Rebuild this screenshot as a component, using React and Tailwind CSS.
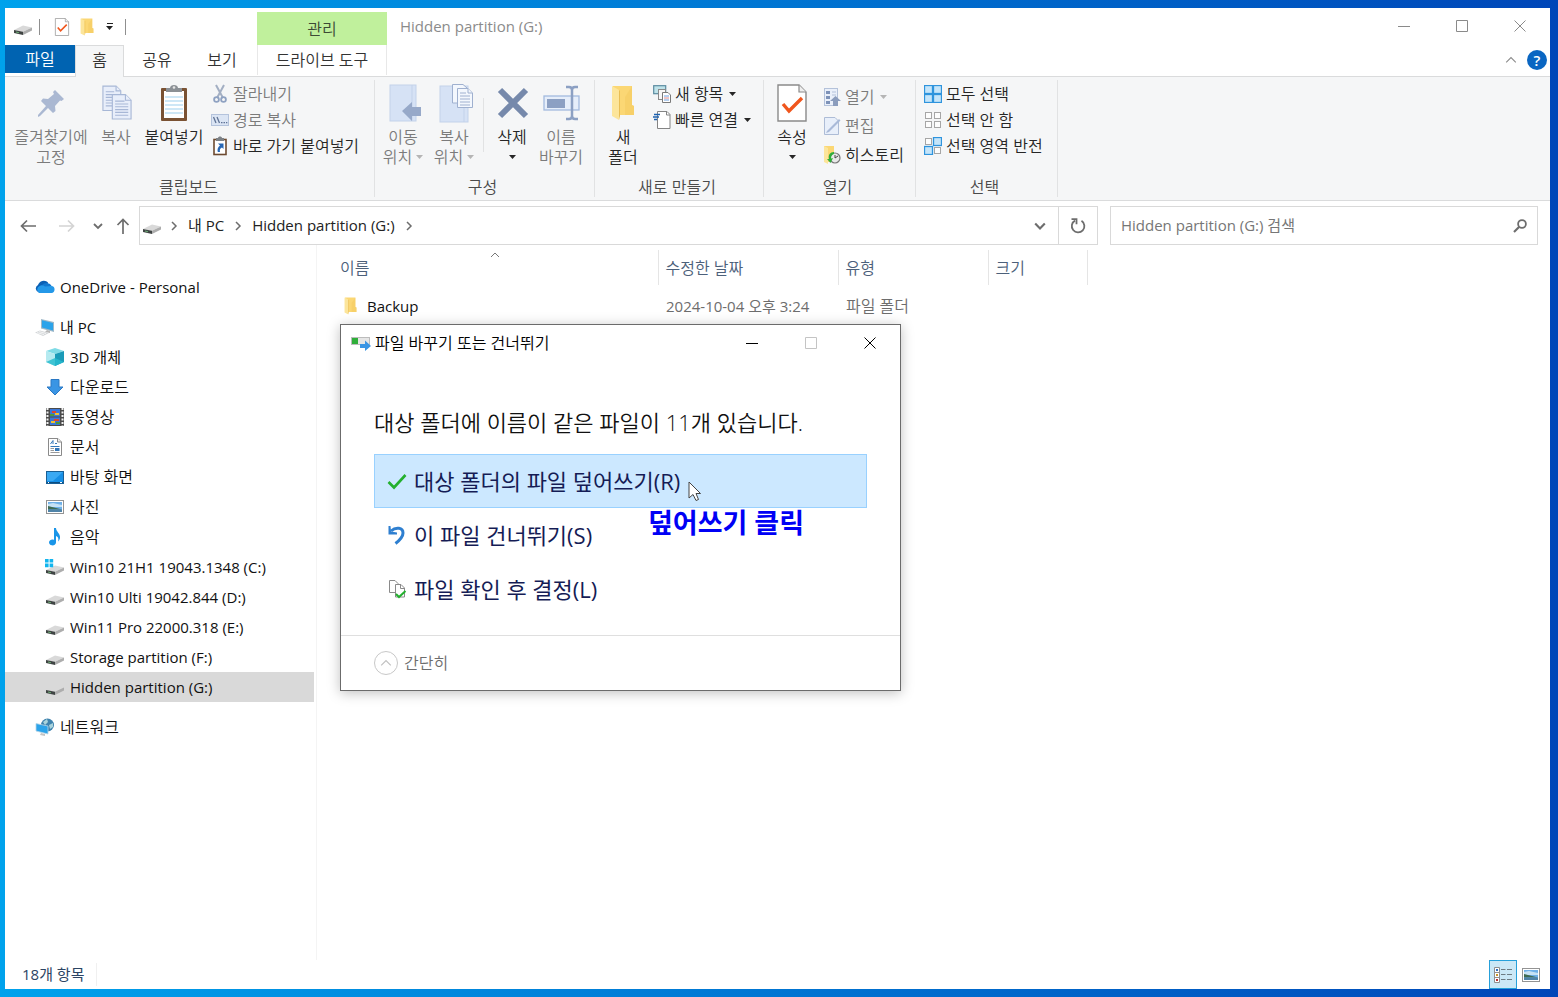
const DIM = "text-[#7b7b7b]";
const INK = "text-[#262626]";

/* ---------- icons ---------- */

function DriveIcon({ windows = false, className = "h-5 w-5" }) {
  return (
    <svg viewBox="0 0 20 20" className={`shrink-0 ${className}`} aria-hidden="true">
      <path d="M1 13 10 8.500 19 10.500 10 14.800Z" fill="#d9d9d9" />
      <path d="M10 14.800 19 10.500V13.500L10 18Z" fill="#adadad" />
      <path d="M1 13 10 14.800V18L1 16Z" fill="#3f4443" />
      <path d="M3 14.600 6 15.200v1l-3-.6Z" fill="#6fae77" />
      {windows && (
        <path d="M0 2h3.6v3.6H0zM4.6 2h3.6v3.6H4.6zM0 6.6h3.6v3.6H0zM4.6 6.6h3.6v3.6H4.6z" fill="#12b5ee" />
      )}
    </svg>
  );
}

function FolderIcon({ className }) {
  return (
    <svg viewBox="0 0 24 36" preserveAspectRatio="none" className={`shrink-0 ${className}`} aria-hidden="true">
      <path d="M2 1H21V20L23 21V30H2Z" fill="#fbd774" />
      <path d="M14 20V12L21 1V20L23 21V30H14Z" fill="#f5cc62" opacity=".6" />
      <path d="M1 1 8 5V35L1 31Z" fill="#fce59b" />
      <path d="M8 5V35L9 31V6Z" fill="#e9be55" />
    </svg>
  );
}

function CheckPage({ className }) {
  return (
    <svg viewBox="0 0 30 38" className={`shrink-0 ${className}`} aria-hidden="true">
      <path d="M1 1H22L29 8V37H1Z" fill="#fff" stroke="#8a8a8a" strokeWidth="1.4" />
      <path d="M22 1V8H29" fill="#eee" stroke="#8a8a8a" strokeWidth="1.2" />
      <path d="M6 20 12 27 25 14" fill="none" stroke="#f0561d" strokeWidth="3.4" />
    </svg>
  );
}

function PinIcon() {
  return (
    <svg viewBox="0 0 28 28" className="h-7 w-7" aria-hidden="true">
      <path d="M18 1 27 10 24.500 12 23 11.500 18 17 18.500 22 16 24 11 19 3 27 1 28 1 26 9 17 4 12 6 9.500 11 10 17 5 16 3Z" fill="#aab8d2" />
    </svg>
  );
}

function CopyIcon() {
  return (
    <svg viewBox="0 0 32 38" className="ml-0.5 h-9 w-[30px]" aria-hidden="true">
      <g fill="#e8eefa" stroke="#a7b7d6" strokeWidth="1.200">
        <path d="M1 1H15L20 6V27H1Z" />
        <path d="M15 1V6H20M4 7H13M4 10H17M4 13H17M4 16H17M4 19H17M4 22H17" />
        <path d="M11 10H25L31 16V36H11Z" />
        <path d="M25 10V16H31M14 17H24M14 20H28M14 23H28M14 26H28M14 29H28M14 32H28" />
      </g>
    </svg>
  );
}

function PasteIcon() {
  return (
    <svg viewBox="0 0 28 38" className="h-[38px] w-7" aria-hidden="true">
      <rect x="1" y="4" width="26" height="33" rx="1" fill="#7a5233" />
      <rect x="4" y="7" width="20" height="27" fill="#fff" />
      <path d="M5 13H23M5 17H23M5 21H23M5 25H23M5 29H23" stroke="#bfe0f4" strokeWidth="1.500" />
      <path d="M6 4H10C10 0 18 0 18 4H22V8H6Z" fill="#8b9095" />
      <circle cx="14" cy="3.500" r="1.300" fill="#e5e5e5" />
    </svg>
  );
}

function ScissorsIcon() {
  return (
    <svg viewBox="0 0 18 20" className="h-5 w-[18px] shrink-0" aria-hidden="true">
      <path d="M5 1 12 14M13 1 6 14" stroke="#a3afc3" strokeWidth="2" />
      <circle cx="5.500" cy="15.500" r="2.400" fill="none" stroke="#8fa2c2" strokeWidth="1.800" />
      <circle cx="12.500" cy="15.500" r="2.400" fill="none" stroke="#8fa2c2" strokeWidth="1.800" />
    </svg>
  );
}

function PathIcon() {
  return (
    <svg viewBox="0 0 18 12" className="h-3 w-[18px] shrink-0" aria-hidden="true">
      <rect x=".5" y=".5" width="17" height="11" fill="#dbe5f4" stroke="#b4c3dc" />
      <path d="M2.500 3 5 9M6 3 8.500 9" stroke="#5f7396" strokeWidth="1.300" />
      <path d="M10 8h1.500v1.300H10zM12.500 8H14v1.300h-1.500zM15 8h1.300v1.300H15z" fill="#5f7396" />
    </svg>
  );
}

function PasteShortcutIcon() {
  return (
    <svg viewBox="0 0 18 20" className="h-5 w-[18px] shrink-0" aria-hidden="true">
      <rect x="3" y="3.500" width="12" height="15" fill="#fff" stroke="#6d4a30" strokeWidth="1.600" />
      <path d="M5 2H7C7 0 11 0 11 2H13V5H5Z" fill="#7d8287" />
      <path d="M7 7.500H12.500V13L11 11.500C9 12 8.500 14 9 16H6.800C6 13 7 11 9 9.500Z" fill="#2767b5" />
    </svg>
  );
}

function MoveToIcon() {
  return (
    <svg viewBox="0 0 34 38" className="ml-1 h-[38px] w-[34px]" aria-hidden="true">
      <rect x="2" y="1" width="26" height="36" fill="#d6e2f5" stroke="#c3d2ea" />
      <path d="M24 1V37" stroke="#c3d2ea" />
      <path d="M14 27 24 18V23H33V32H24V37Z" fill="#97a9c9" />
    </svg>
  );
}

function CopyToIcon() {
  return (
    <svg viewBox="0 0 34 40" className="ml-1 h-10 w-[34px]" aria-hidden="true">
      <rect x="1" y="3" width="28" height="36" fill="#d6e2f5" stroke="#c3d2ea" />
      <path d="M25 3V39" stroke="#c3d2ea" />
      <g fill="#f3f7fd" stroke="#9fb0cf">
        <path d="M13.500 1.500H24L28 5V20H13.500Z" />
        <path d="M18.500 5.500H29L33.500 10V24.500H18.500Z" />
        <path d="M29 5.500V10H33M21 10H27M21 13H31M21 16H31M21 19H31M21 22H31" />
      </g>
    </svg>
  );
}

function DeleteIcon() {
  return (
    <svg viewBox="0 0 32 32" className="ml-0.5 h-8 w-8" aria-hidden="true">
      <path d="M3 3 29 29M29 3 3 29" stroke="#7689ab" strokeWidth="6" />
    </svg>
  );
}

function RenameIcon() {
  return (
    <svg viewBox="0 0 38 36" className="ml-0.5 h-9 w-[38px]" aria-hidden="true">
      <rect x="1" y="11" width="35" height="14" fill="#e6eefa" stroke="#a3bbdf" strokeWidth="1.300" />
      <rect x="4" y="14" width="18" height="9" fill="#8ca0c3" />
      <path d="M23 2H26C28 2 29 3 29 5V31C29 33 28 34 26 34H23M35 2H32C30 2 29 3 29 5M29 31C29 33 30 34 32 34H35" fill="none" stroke="#8ca0c3" strokeWidth="2.500" />
    </svg>
  );
}

function NewItemIcon() {
  return (
    <svg viewBox="0 0 18 20" className="h-5 w-[18px] shrink-0" aria-hidden="true">
      <rect x=".7" y="1.700" width="12" height="8" fill="#bfe3ea" stroke="#5b8ca0" strokeWidth="1.200" />
      <rect x="5.500" y="5.500" width="7" height="10" fill="#f7f7f7" stroke="#8a8a8a" />
      <path d="M9.500 8.500H15L17.500 11V18.500H9.500Z" fill="#fff" stroke="#7a7a7a" />
      <path d="M11 12H16M11 16H16" stroke="#6aa0e0" />
      <path d="M11 14H16" stroke="#e08a8a" />
    </svg>
  );
}

function EasyAccessIcon() {
  return (
    <svg viewBox="0 0 18 20" className="h-5 w-[18px] shrink-0" aria-hidden="true">
      <path d="M4.500 1.500H14L17 4.500V18.500H4.500Z" fill="#fff" stroke="#848484" />
      <path d="M13.500 1.500V5H17" fill="none" stroke="#848484" />
      <path d="M1 4.500H7M0 7H6M1 9.500H4" stroke="#1d62b0" strokeWidth="1.500" />
    </svg>
  );
}

function OpenIcon() {
  return (
    <svg viewBox="0 0 18 20" className="h-5 w-[18px] shrink-0" aria-hidden="true">
      <rect x="1.500" y="1.500" width="13" height="17" fill="#eaf0fa" stroke="#b4c2da" />
      <path d="M3 4h4v3H3zM3 9h4v3H3zM3 14h4v3H3z" fill="#7d92b8" />
      <path d="M9 5H13M9 8H13" stroke="#b4c2da" />
      <path d="M12.500 9 18 14H15V19H10V14H7Z" fill="#8b9dbd" />
    </svg>
  );
}

function EditIcon() {
  return (
    <svg viewBox="0 0 18 20" className="h-5 w-[18px] shrink-0" aria-hidden="true">
      <path d="M1.500 1.500H12L15.500 5V18.500H1.500Z" fill="#e8effa" stroke="#adbcd6" />
      <path d="M4 15 16 3 17.500 4.500 6 16 3 17Z" fill="#a9bad8" />
    </svg>
  );
}

function HistoryIcon() {
  return (
    <svg viewBox="0 0 18 20" className="h-5 w-[18px] shrink-0" aria-hidden="true">
      <path d="M1 1H11V17H1Z" fill="#fbd774" />
      <path d="M1 1 5 3V19L1 17Z" fill="#fce59b" />
      <circle cx="12" cy="13" r="5" fill="#e8e8e8" stroke="#777" strokeWidth="1.200" />
      <path d="M12 10V13L15 11" fill="none" stroke="#444" />
      <path d="M11 7C7 7 5 10 6 14L4 14 7.500 18 10 13 8 13.500C8 11 9 9.500 11 9Z" fill="#2fae3a" />
    </svg>
  );
}

// Four cells; the ones listed in `on` are drawn selected.
function CellsIcon({ on }) {
  const cells = [[1, 1], [10, 1], [1, 10], [10, 10]];
  return (
    <svg viewBox="0 0 18 18" className="h-[18px] w-[18px] shrink-0" aria-hidden="true">
      {cells.map(([x, y], i) =>
        on.includes(i) ? (
          <rect key={i} x={x - 0.5} y={y - 0.5} width="8" height="8" fill="#c5e5fa" stroke="#2f94dd" strokeWidth="1.300" />
        ) : (
          <rect key={i} x={x + 0.5} y={y + 0.5} width="6" height="6" fill="#fdfdfd" stroke="#a6a6a6" />
        )
      )}
    </svg>
  );
}

function OneDriveIcon() {
  return (
    <svg viewBox="0 0 20 20" className="h-5 w-5 shrink-0" aria-hidden="true">
      <path d="M4 15.500A4 4 0 0 1 3 8 6 6 0 0 1 13 5.500L12 12Z" fill="#0a5fb4" />
      <path d="M7 8A6 6 0 0 1 16.500 8.500L12 13Z" fill="#1177cf" />
      <path d="M4 16A4 4 0 0 1 4.500 9C6 8 8 8 10 9.500L17 9A3.600 3.600 0 0 1 16.500 16Z" fill="#2498e8" />
    </svg>
  );
}

function PcIcon() {
  return (
    <svg viewBox="0 0 20 20" className="h-5 w-5 shrink-0" aria-hidden="true">
      <path d="M6 2 19 5V15L6 11.500Z" fill="#9fb8c8" />
      <path d="M7 3.300 18 6V13.500L7 10.500Z" fill="#2ba3ea" />
      <path d="M12 13 15 14V16L10 15Z" fill="#b5b5b5" />
      <path d="M0 15.500 5 13.500 14 16 8 19Z" fill="#d3d6d8" />
      <path d="M2 15.600 9 17.600M4 14.600 11 16.500" stroke="#fff" strokeWidth=".7" />
    </svg>
  );
}

function CubeIcon() {
  return (
    <svg viewBox="0 0 20 20" className="h-5 w-5 shrink-0" aria-hidden="true">
      <path d="M10 1 19 4 10 7 1 4Z" fill="#7fdbe6" />
      <path d="M1 4 10 7V19L1 15Z" fill="#b5eaf0" />
      <path d="M1 15 10 11V19Z" fill="#3fc3d3" />
      <path d="M10 7 19 4V15L10 19Z" fill="#1a9bb8" />
      <path d="M10 11 19 15 10 19Z" fill="#24b6cc" />
    </svg>
  );
}

function DownloadIcon() {
  return (
    <svg viewBox="0 0 20 20" className="h-5 w-5 shrink-0" aria-hidden="true">
      <path d="M6 2.500H14V10H18L10 18 2 10H6Z" fill="#3a95e4" stroke="#2a78c4" />
    </svg>
  );
}

function VideoIcon() {
  return (
    <svg viewBox="0 0 20 20" className="h-5 w-5 shrink-0" aria-hidden="true">
      <rect x="1" y="1" width="18" height="18" fill="#4b4b4b" />
      <path d="M2.500 1V19M17.500 1V19" stroke="#f0f0f0" strokeWidth="2" strokeDasharray="2 1.500" />
      <rect x="5" y="2" width="10" height="7.500" fill="#3c78d8" />
      <rect x="5" y="10.500" width="10" height="7.500" fill="#3c78d8" />
      <path d="M7 4h4v2H7zM9 12h5v2H9z" fill="#e0452c" />
      <path d="M10 6h4v2h-4zM6 14h4v2H6z" fill="#f0c330" />
      <path d="M5 7h4v2H5zM11 15h4v2h-4z" fill="#4a9b3d" />
    </svg>
  );
}

function DocIcon() {
  return (
    <svg viewBox="0 0 20 20" className="h-5 w-5 shrink-0" aria-hidden="true">
      <path d="M3.500 1.500H13L16.500 5V18.500H3.500Z" fill="#fff" stroke="#8a8a8a" />
      <path d="M12.500 1.500V5H16.500" fill="#eee" stroke="#8a8a8a" />
      <path d="M5.500 7 8 3.500V7M10 6.500H12M5.500 9.500H14.500" stroke="#3477b8" fill="none" />
      <path d="M5.500 11.500H9M5.500 13.500H9M5.500 15.500H14.500" stroke="#9a9a9a" />
      <rect x="10" y="11" width="4.500" height="3" fill="#3477b8" />
    </svg>
  );
}

function DesktopIcon() {
  return (
    <svg viewBox="0 0 20 20" className="h-5 w-5 shrink-0" aria-hidden="true">
      <rect x="1.500" y="4.500" width="17" height="12" fill="#168fe6" stroke="#1a5f94" />
      <path d="M2 5H18L8 14H2Z" fill="#3aa9f3" />
      <path d="M2 15.500H18" stroke="#0c4c80" />
      <path d="M3 15.500H4M15 15.500H17" stroke="#fff" />
    </svg>
  );
}

function PictureIcon() {
  return (
    <svg viewBox="0 0 20 20" className="h-5 w-5 shrink-0" aria-hidden="true">
      <rect x="1.500" y="3.500" width="17" height="13" fill="#fff" stroke="#939393" />
      <rect x="3" y="5" width="14" height="10" fill="#6eb0e8" />
      <path d="M3 7 8 6 17 8V10H3Z" fill="#c6e2f5" />
      <path d="M3 9 9 10.500 17 12.500H3Z" fill="#3f6b52" />
      <path d="M3 12.500H17V15H3Z" fill="#4f83a8" />
    </svg>
  );
}

function MusicIcon() {
  return (
    <svg viewBox="0 0 20 20" className="h-5 w-5 shrink-0" aria-hidden="true">
      <path d="M9 1H11C11 5 15.500 6 15 11 14.800 12.500 14 13.500 13 14.500 14 11.500 13 9.500 11 9V15.500A3.500 3 0 1 1 9 12.700Z" fill="#1a95e8" />
    </svg>
  );
}

function NetworkIcon() {
  return (
    <svg viewBox="0 0 20 20" className="h-5 w-5 shrink-0" aria-hidden="true">
      <circle cx="12.500" cy="8" r="6.500" fill="#3f83ae" />
      <path d="M8 5 12 2 13 5 10 8ZM14 8 18 6 18 10 15 12Z" fill="#a9d3dc" />
      <path d="M1 6.500 13 9V17L1 14Z" fill="#2ba3ea" stroke="#b9d6e6" strokeWidth=".8" />
      <path d="M6 16 10 17V19L5 18Z" fill="#c4c4c4" />
    </svg>
  );
}

function Chevron({ dir = "down", className = "h-2.5 w-2.5 text-[#6d6d6d]", thick = 1.8 }) {
  const d = { down: "M1 3 5 7 9 3", up: "M1 7 5 3 9 7", right: "M3 1 7 5 3 9" }[dir];
  return (
    <svg viewBox="0 0 10 10" className={`shrink-0 ${className}`} aria-hidden="true">
      <path d={d} fill="none" stroke="currentColor" strokeWidth={thick} />
    </svg>
  );
}

function Caret({ className = "h-1 w-[7px]" }) {
  return (
    <svg viewBox="0 0 7 4" className={`shrink-0 ${className}`} aria-hidden="true">
      <path d="M0 0H7L3.500 4Z" fill="currentColor" />
    </svg>
  );
}

function WindowGlyph({ kind }) {
  const d = {
    minimize: "M0 6.500H12",
    maximize: "M.5 .5H11.500V11.500H.5Z",
    close: "M.5 .5 11.500 11.500M11.500 .5 .5 11.500",
  }[kind];
  return (
    <svg viewBox="0 0 12 12" className="h-3 w-3" aria-hidden="true">
      <path d={d} fill="none" stroke="currentColor" />
    </svg>
  );
}

/* ---------- ribbon ---------- */

function BigButton({ icon, lines, caret, dim, className }) {
  return (
    <button type="button" className={`flex flex-col items-center pt-[3px] leading-5 ${dim ? DIM : INK} ${className}`}>
      <span className="mb-1 flex h-10 items-center justify-center">{icon}</span>
      <span className="whitespace-nowrap">{lines[0]}</span>
      {(lines[1] || caret) && (
        <span className="flex h-5 items-center gap-1 whitespace-nowrap">
          {lines[1]}
          {caret && <Caret className={dim ? "h-1 w-[7px] text-[#b5b5b5]" : "h-1 w-[7px]"} />}
        </span>
      )}
    </button>
  );
}

function SmallButton({ icon, label, caret, dim, className = "h-[26px]" }) {
  return (
    <button type="button" className={`flex items-center gap-1 whitespace-nowrap ${dim ? DIM : INK} ${className}`}>
      {icon}
      {label}
      {caret && <Caret className={dim ? "ml-0.5 h-1 w-[7px] text-[#b5b5b5]" : "ml-0.5 h-1 w-[7px]"} />}
    </button>
  );
}

function Group({ label, className, children }) {
  return (
    <section aria-label={label} className={`my-[3px] flex shrink-0 flex-col border-r border-[#e1e2e3] ${className}`}>
      <div className="flex flex-1 items-start">{children}</div>
      <p className="pr-1 text-center leading-5 text-[#4a4a4a]">{label}</p>
    </section>
  );
}

function Ribbon() {
  return (
    <div className="flex h-[124px] overflow-hidden border-b border-[#dadbdc] bg-[#f5f6f7] text-[16px] font-[350]">
      <Group label="클립보드" className="w-[370px] pl-[2px]">
        <BigButton dim className="w-[88px]" icon={<PinIcon />} lines={["즐겨찾기에", "고정"]} />
        <BigButton dim className="w-[42px]" icon={<CopyIcon />} lines={["복사"]} />
        <BigButton className="w-[74px]" icon={<PasteIcon />} lines={["붙여넣기"]} />
        <div className="flex flex-col pt-px">
          <SmallButton dim icon={<ScissorsIcon />} label="잘라내기" />
          <SmallButton dim icon={<PathIcon />} label="경로 복사" />
          <SmallButton icon={<PasteShortcutIcon />} label="바로 가기 붙여넣기" />
        </div>
      </Group>

      <Group label="구성" className="w-[220px]">
        <BigButton dim caret className="w-[56px]" icon={<MoveToIcon />} lines={["이동", "위치"]} />
        <BigButton dim caret className="w-[46px]" icon={<CopyToIcon />} lines={["복사", "위치"]} />
        <span className="mx-1.5 mt-[18px] h-[54px] w-px bg-[#e1e2e3]" />
        <BigButton caret className="w-[44px]" icon={<DeleteIcon />} lines={["삭제", ""]} />
        <BigButton dim className="w-[54px]" icon={<RenameIcon />} lines={["이름", "바꾸기"]} />
      </Group>

      <Group label="새로 만들기" className="w-[169px]">
        <BigButton className="w-[56px]" icon={<FolderIcon className="h-9 w-6" />} lines={["새", "폴더"]} />
        <div className="flex flex-col pt-px pl-0.5">
          <SmallButton caret icon={<NewItemIcon />} label="새 항목" />
          <SmallButton caret icon={<EasyAccessIcon />} label="빠른 연결" />
        </div>
      </Group>

      <Group label="열기" className="w-[152px]">
        <BigButton caret className="w-[56px]" icon={<CheckPage className="h-[38px] w-[30px]" />} lines={["속성", ""]} />
        <div className="flex flex-col pt-0.5 pl-[3px]">
          <SmallButton dim caret className="h-[29px]" icon={<OpenIcon />} label="열기" />
          <SmallButton dim className="h-[29px]" icon={<EditIcon />} label="편집" />
          <SmallButton className="h-[29px]" icon={<HistoryIcon />} label="히스토리" />
        </div>
      </Group>

      <Group label="선택" className="w-[142px]">
        <div className="flex flex-col pt-px pl-2">
          <SmallButton icon={<CellsIcon on={[0, 1, 2, 3]} />} label="모두 선택" />
          <SmallButton icon={<CellsIcon on={[]} />} label="선택 안 함" />
          <SmallButton icon={<CellsIcon on={[1, 2]} />} label="선택 영역 반전" />
        </div>
      </Group>
    </div>
  );
}

/* ---------- window chrome ---------- */

function TitleBar() {
  return (
    <header className="flex h-[37px]">
      <div className="flex w-[252px] shrink-0 items-center pl-2 text-[#222]">
        <DriveIcon />
        <span className="ml-1.5 h-4 w-px bg-[#8f8f8f]" />
        <button type="button" aria-label="속성" className="ml-3.5">
          <CheckPage className="h-[18px] w-4" />
        </button>
        <button type="button" aria-label="새 폴더" className="ml-2.5">
          <FolderIcon className="h-[18px] w-[14px]" />
        </button>
        <button type="button" aria-label="빠른 실행 도구 모음 사용자 지정" className="ml-3 flex flex-col items-center gap-0.5">
          <span className="h-px w-1.5 bg-[#222]" />
          <Caret />
        </button>
        <span className="ml-3 h-4 w-px bg-[#8f8f8f]" />
      </div>
      <div className="mt-1 flex w-[130px] shrink-0 items-center justify-center bg-[#c0f09c] text-[16px] font-[350] text-[#3d4a35]">
        관리
      </div>
      <h1 className="flex-1 pl-[13px] text-[15px] leading-[37px] text-[#8b8b8b]">Hidden partition (G:)</h1>
      <div className="flex pr-px text-[#8a8a8a]">
        {[["minimize", "최소화"], ["maximize", "최대화"], ["close", "닫기"]].map(([kind, label]) => (
          <button key={kind} type="button" aria-label={label} className="flex h-9 w-[58px] items-center justify-center">
            <WindowGlyph kind={kind} />
          </button>
        ))}
      </div>
    </header>
  );
}

function TabRow() {
  return (
    <nav aria-label="리본 탭" className="flex h-8 items-start border-b border-[#dadbdc] text-[16px] font-[350] text-[#333]">
      <button type="button" className="h-7 w-[70px] bg-[#0063b1] text-white">파일</button>
      <button type="button" aria-current="page" className="h-8 w-[49px] shrink-0 border-x border-t border-[#dadbdc] bg-[#f5f6f7] pb-1">홈</button>
      <button type="button" className="h-[30px] w-[66px]">공유</button>
      <button type="button" className="h-[30px] w-[64px]">보기</button>
      <button type="button" className="ml-[3px] h-[30px] w-[130px] border-x border-[#e8e8e8] whitespace-nowrap">드라이브 도구</button>
      <div className="ml-auto flex h-[30px] items-center gap-2.5 pr-[3px]">
        <button type="button" aria-label="리본 최소화">
          <Chevron dir="up" thick={0.9} className="h-3 w-3 text-[#8a8a8a]" />
        </button>
        <button type="button" aria-label="도움말" className="h-5 w-5 rounded-full bg-[#0a66c2] text-[15px] leading-5 font-semibold text-white">
          ?
        </button>
      </div>
    </nav>
  );
}

function ArrowIcon({ d, className = "" }) {
  return (
    <svg viewBox="0 0 16 16" className={`h-4 w-4 ${className}`} aria-hidden="true">
      <path d={d} fill="none" stroke="currentColor" strokeWidth="1.700" />
    </svg>
  );
}

function AddressRow() {
  return (
    <div className="flex h-11 items-end pr-3">
      <div className="flex h-[39px] w-[134px] shrink-0 items-center pl-[15px] text-[#6d6d6d]">
        <button type="button" aria-label="뒤로"><ArrowIcon d="M16 8H1.500M7 2.500 1.500 8 7 13.500" /></button>
        <button type="button" aria-label="앞으로" className="ml-[23px]"><ArrowIcon className="text-[#d4d4d4]" d="M0 8H14.500M9 2.500 14.500 8 9 13.500" /></button>
        <button type="button" aria-label="최근 위치" className="ml-[18px]"><Chevron className="h-2.5 w-2.5" /></button>
        <button type="button" aria-label="위로" className="ml-3"><ArrowIcon d="M8 16V1.500M2.500 7 8 1.500 13.500 7" /></button>
      </div>
      <div className="flex h-[39px] min-w-0 flex-1 border border-[#d9d9d9] text-[15px] text-[#222]">
        <div className="flex flex-1 items-center pl-0.5">
          <DriveIcon />
          <Chevron dir="right" className="ml-[7px] h-2.5 w-2.5 text-[#6d6d6d]" thick={1.5} />
          <a href="#pc" className="ml-[9px]">내 PC</a>
          <Chevron dir="right" className="ml-[9px] h-2.5 w-2.5 text-[#6d6d6d]" thick={1.5} />
          <a href="#g" className="ml-[9px]">Hidden partition (G:)</a>
          <Chevron dir="right" className="ml-[9px] h-2.5 w-2.5 text-[#6d6d6d]" thick={1.5} />
        </div>
        <button type="button" aria-label="이전 위치" className="flex w-9 items-center justify-center">
          <Chevron className="h-3 w-3 text-[#6d6d6d]" />
        </button>
        <button type="button" aria-label="새로 고침" className="flex w-[39px] items-center justify-center border-l border-[#d9d9d9] text-[#6d6d6d]">
          <svg viewBox="0 0 16 16" className="h-4 w-4" aria-hidden="true">
            <path d="M11.500 2.800A6.300 6.300 0 1 1 5 2.600" fill="none" stroke="currentColor" strokeWidth="1.800" />
            <path d="M1.500 1.200H6.500V6.200" fill="none" stroke="currentColor" strokeWidth="1.800" />
          </svg>
        </button>
      </div>
      <label className="ml-3 flex h-[39px] w-[428px] shrink-0 items-center border border-[#d9d9d9] pr-2.5 pl-2.5">
        <input
          type="search"
          aria-label="Hidden partition (G:) 검색"
          placeholder="Hidden partition (G:) 검색"
          className="min-w-0 flex-1 text-[15px] outline-none placeholder:text-[#767676]"
        />
        <svg viewBox="0 0 14 14" className="h-3.5 w-3.5 text-[#6d6d6d]" aria-hidden="true">
          <circle cx="9" cy="5" r="3.900" fill="none" stroke="currentColor" strokeWidth="1.800" />
          <path d="M6 8 1 13" stroke="currentColor" strokeWidth="2.200" />
        </svg>
      </label>
    </div>
  );
}

/* ---------- body ---------- */

const PC_ITEMS = [
  { label: "3D 개체", icon: <CubeIcon /> },
  { label: "다운로드", icon: <DownloadIcon />, korean: true },
  { label: "동영상", icon: <VideoIcon />, korean: true },
  { label: "문서", icon: <DocIcon />, korean: true },
  { label: "바탕 화면", icon: <DesktopIcon />, korean: true },
  { label: "사진", icon: <PictureIcon />, korean: true },
  { label: "음악", icon: <MusicIcon />, korean: true },
  { label: "Win10 21H1 19043.1348 (C:)", icon: <DriveIcon windows /> },
  { label: "Win10 Ulti 19042.844 (D:)", icon: <DriveIcon /> },
  { label: "Win11 Pro 22000.318 (E:)", icon: <DriveIcon /> },
  { label: "Storage partition (F:)", icon: <DriveIcon /> },
  { label: "Hidden partition (G:)", icon: <DriveIcon />, selected: true },
];

function TreeItem({ item, nested }) {
  return (
    <a
      href={`#${item.label}`}
      className={`flex h-[30px] items-center gap-[5px] whitespace-nowrap ${nested ? "pl-10" : "pl-[30px]"} ${
        item.selected ? "bg-[#d9d9d9]" : ""
      } ${item.korean ? "text-[16px] font-[350]" : "text-[15px]"}`}
    >
      {item.icon}
      {item.label}
    </a>
  );
}

function Sidebar() {
  return (
    <aside className="mr-0.5 w-[309px] shrink-0 pt-[27px] text-[#111]">
      <TreeItem item={{ label: "OneDrive - Personal", icon: <OneDriveIcon /> }} />
      <div className="my-2.5">
        <TreeItem item={{ label: "내 PC", icon: <PcIcon /> }} />
        {PC_ITEMS.map((item) => <TreeItem key={item.label} item={item} nested />)}
      </div>
      <TreeItem item={{ label: "네트워크", icon: <NetworkIcon />, korean: true }} />
    </aside>
  );
}

function FileTable() {
  return (
    <table className="w-[771px] table-fixed border-collapse text-left">
      <thead className="text-[16px] text-[#4c607a]">
        <tr className="h-[35px]">
          <th scope="col" className="relative w-[341px] border-r border-[#e5e5e5] pl-[23px] font-[350]">
            이름
            <Chevron dir="up" thick={1} className="absolute top-0 left-[173px] h-2.5 w-2.5 text-[#777]" />
          </th>
          <th scope="col" className="w-[180px] border-r border-[#e5e5e5] pl-[7px] font-[350]">수정한 날짜</th>
          <th scope="col" className="w-[150px] border-r border-[#e5e5e5] pl-[7px] font-[350]">유형</th>
          <th scope="col" className="border-r border-[#e5e5e5] pl-[7px] font-[350]">크기</th>
        </tr>
      </thead>
      <tbody>
        <tr className="h-[42px] text-[15px] text-[#6d6d6d]">
          <td className="pl-[27px] text-[#111]">
            <span className="flex items-center gap-2.5">
              <FolderIcon className="h-[18px] w-[13px]" />
              Backup
            </span>
          </td>
          <td className="pl-2">2024-10-04 오후 3:24</td>
          <td className="pl-2 text-[16px] font-[350]">파일 폴더</td>
          <td />
        </tr>
      </tbody>
    </table>
  );
}

function Choice({ icon, label, selected }) {
  return (
    <button
      type="button"
      className={`flex h-[54px] w-full items-center gap-[7px] border pl-3 text-[22px] whitespace-nowrap text-[#151c55] ${
        selected ? "border-[#99d1ff] bg-[#cce8ff]" : "border-transparent"
      }`}
    >
      {icon}
      {label}
    </button>
  );
}

function ReplaceDialog() {
  return (
    <div
      role="dialog"
      aria-labelledby="dialog-title"
      className="absolute top-[79px] left-[23px] flex h-[367px] w-[561px] flex-col border border-[#6b6b6b] bg-white shadow-[0_2px_12px_rgba(0,0,0,0.25)]"
    >
      <div className="flex h-9 items-center pl-2.5">
        <svg viewBox="0 0 20 16" className="h-4 w-5" aria-hidden="true">
          <rect x=".5" y="2.500" width="18" height="7" fill="#e6e6e6" stroke="#bcbcbc" />
          <rect x="1" y="3" width="6" height="6" fill="#2fae3a" />
          <path d="M9 9H14V5.500L20 11 14 16V13H9Z" fill="#3a95e4" />
        </svg>
        <h2 id="dialog-title" className="flex-1 pl-1 text-[16px] font-[350]">파일 바꾸기 또는 건너뛰기</h2>
        <div className="flex pr-px">
          {[["minimize", "최소화"], ["maximize", "최대화"], ["close", "닫기"]].map(([kind, label]) => (
            <button
              key={kind}
              type="button"
              aria-label={label}
              disabled={kind === "maximize"}
              className="flex h-9 w-[59px] items-center justify-center disabled:text-[#c4c4c4]"
            >
              <WindowGlyph kind={kind} />
            </button>
          ))}
        </div>
      </div>

      <div className="relative flex-1 px-[33px] pt-11">
        <p className="mb-[15px] text-[22px] leading-[34px] font-[350] text-[#111]">대상 폴더에 이름이 같은 파일이 11개 있습니다.</p>
        <Choice
          selected
          label="대상 폴더의 파일 덮어쓰기(R)"
          icon={
            <svg viewBox="0 0 20 20" className="h-5 w-5" aria-hidden="true">
              <path d="M1.500 11 7 16.500 18.500 4" fill="none" stroke="#23b02e" strokeWidth="2.600" />
            </svg>
          }
        />
        <Choice
          label="이 파일 건너뛰기(S)"
          icon={
            <svg viewBox="0 0 20 20" className="h-5 w-5" aria-hidden="true">
              <path d="M4 6C9 1.500 16 2.500 16 8 16 12 13 15 8.500 18.500" fill="none" stroke="#2e7fd0" strokeWidth="3" />
              <path d="M1.500 1V9.500H10V7.500L4 6.500 3.500 1Z" fill="#2e7fd0" />
            </svg>
          }
        />
        <Choice
          label="파일 확인 후 결정(L)"
          icon={
            <svg viewBox="0 0 20 20" className="h-5 w-5" aria-hidden="true">
              <path d="M2.500 1.500H8L11 4.500V13.500H2.500Z" fill="#fff" stroke="#8a8a8a" />
              <path d="M8.500 5.500H14L17.500 9V18H8.500Z" fill="#fff" stroke="#8a8a8a" />
              <path d="M13.500 5.500V9.500H17.500" fill="none" stroke="#8a8a8a" />
              <path d="M9 15 12 18 18.500 12" fill="none" stroke="#23b02e" strokeWidth="2" />
            </svg>
          }
        />
        <svg viewBox="0 0 14 21" className="absolute top-[120px] left-[347px] h-[21px] w-3.5" aria-hidden="true">
          <path d="M1 1V17L5 13.500 8 19.500 10.500 18.500 8 12.500H12.500Z" fill="#fff" stroke="#444" />
        </svg>
        <p className="absolute top-[145px] left-[307px] text-[27px] leading-[34px] font-bold whitespace-nowrap text-[#0000f5]">덮어쓰기 클릭</p>
      </div>

      <div className="h-[55px] border-t border-[#dfdfdf] pl-[33px]">
        <button type="button" className="flex h-full items-center gap-1.5 text-[16px] font-[350] text-[#6d6d6d]">
          <span className="flex h-6 w-6 items-center justify-center rounded-full border border-[#c8c8c8]">
            <Chevron dir="up" thick={1} className="h-3 w-3 text-[#c0c0c0]" />
          </span>
          간단히
        </button>
      </div>
    </div>
  );
}

function StatusBar() {
  return (
    <footer className="flex h-[29px] items-center pl-[17px] text-[15px] text-[#2c4463]">
      <span className="border-r border-[#f0f0f0] pr-3">18개 항목</span>
      <button type="button" aria-label="자세히" className="ml-auto flex h-[29px] w-7 items-center justify-center border border-[#26a0da] bg-[#cbe8f6]">
        <svg viewBox="0 0 20 18" className="h-[18px] w-5" aria-hidden="true">
          <path d="M1.500 1.500H6.500V16.500H1.500ZM1.500 6.500H6.500M1.500 11.500H6.500" fill="#fff" stroke="#8f8f8f" />
          <path d="M3 3h2v2H3z" fill="#2f6fc0" />
          <path d="M3 8h2v2H3z" fill="#c9962a" />
          <path d="M3 13h2v2H3z" fill="#c02f2f" />
          <path d="M8 3.500H12.500M14 3.500H19M8 8.500H12.500M14 8.500H19M8 13.500H12.500M14 13.500H19" stroke="#6d7b82" />
        </svg>
      </button>
      <button type="button" aria-label="큰 아이콘" className="mr-[9px] ml-1">
        <PictureIcon />
      </button>
    </footer>
  );
}

export default function App() {
  return (
    <div className="flex min-h-screen bg-linear-to-r from-[#00a2ec] to-[#0046b8] pt-2 pr-2 pb-2 pl-[5px] font-['Open_Sans','Noto_Sans_CJK_KR',sans-serif]">
      <div className="flex min-w-0 flex-1 flex-col bg-white">
        <TitleBar />
        <TabRow />
        <Ribbon />
        <AddressRow />
        <div className="flex flex-1">
          <Sidebar />
          <main className="relative min-w-0 flex-1 border-l border-[#f4f4f4] pt-[5px]">
            <FileTable />
            <ReplaceDialog />
          </main>
        </div>
        <StatusBar />
      </div>
    </div>
  );
}
